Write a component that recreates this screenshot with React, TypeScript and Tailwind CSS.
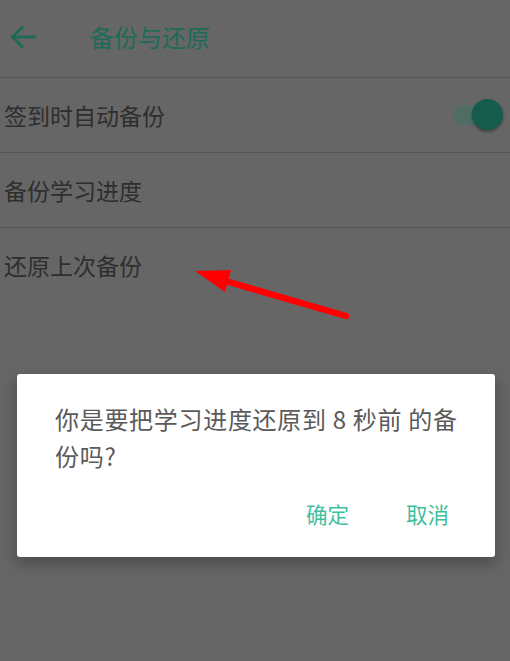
import React from 'react'

const font = { fontFamily: '"Noto Sans CJK SC", "Noto Sans", Roboto, sans-serif' }

function Toggle() {
  return (
    <div className="relative h-[32px] w-[50px]">
      <div className="absolute left-0 top-[6px] h-[20px] w-[42px] rounded-full bg-[#4f6d64]" />
      <div className="absolute right-0 top-0 h-[31px] w-[31px] rounded-full bg-[#155c4c] shadow-[0_2px_3px_rgba(0,0,0,0.35)]" />
    </div>
  )
}

function Row({ label, last, children }: { label: string; last?: boolean; children?: React.ReactNode }) {
  return (
    <div className={`flex h-[75px] items-center justify-between pl-[4px] pr-[7px] ${last ? '' : 'border-b border-[#565656]'}`}>
      <span className="text-[23px] text-[#2e2e2e]">{label}</span>
      {children}
    </div>
  )
}

export default function App() {
  return (
    <div className="relative h-[661px] w-full overflow-hidden bg-[#666666]" style={font}>
      <header className="flex h-[78px] items-center border-b border-[#565656] pb-[4px]">
        <svg className="ml-[9px] h-[26px] w-[28px]" viewBox="0 0 28 26" fill="none" stroke="#1d6b57" strokeWidth="3" strokeLinecap="square">
          <path d="M4 13H25" />
          <path d="M13 3.5L3.5 13L13 22.5" strokeLinejoin="miter" />
        </svg>
        <h1 className="ml-[53px] text-[24px] text-[#1d6b57]">备份与还原</h1>
      </header>
      <Row label="签到时自动备份">
        <Toggle />
      </Row>
      <Row label="备份学习进度" />
      <Row label="还原上次备份" last />

      <svg className="absolute left-0 top-0" width="510" height="661" viewBox="0 0 510 661">
        <line x1="346" y1="316" x2="222" y2="280" stroke="#ff0000" strokeWidth="6.5" strokeLinecap="round" />
        <polygon points="195,271 231,270 225,292" fill="#ff0000" />
      </svg>

      <div className="absolute left-[17px] top-[374px] h-[183px] w-[478px] rounded-[3px] bg-white shadow-[0_6px_16px_rgba(0,0,0,0.3)]">
        <p className="ml-[38px] mt-[26px] w-[412px] text-[24px] leading-[37px] tracking-[0.7px] text-[#5a5a5a]">
          你是要把学习进度还原到 8 秒前 的备份吗?
        </p>
        <div className="mt-[24px] flex justify-end gap-[57px] pr-[46px] text-[21.5px] text-[#3fbf9d]">
          <button>确定</button>
          <button>取消</button>
        </div>
      </div>
    </div>
  )
}
